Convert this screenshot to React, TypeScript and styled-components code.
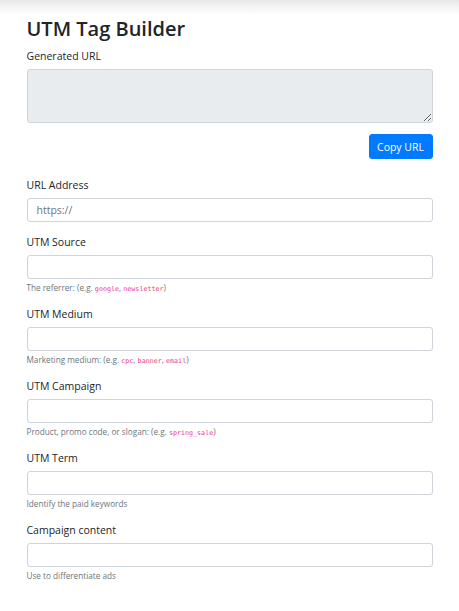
import React from "react";
import styled, { createGlobalStyle } from "styled-components";

const Global = createGlobalStyle`
  html, body { margin: 0; padding: 0; }
  body {
    background: linear-gradient(#e6e7ea 0px, #f6f6f7 8px, #ffffff 16px) no-repeat;
    background-size: 100% 16px;
    background-color: #fff;
    font-family: "Open Sans", "Noto Sans", sans-serif;
    color: #212529;
  }
  * { box-sizing: border-box; }
`;

const Container = styled.div`
  width: 406px;
  margin: 0 auto;
  padding-top: 16px;
  display: flex;
  flex-direction: column;
`;

const Title = styled.h1`
  margin: 0 0 7px;
  font-size: 20px;
  line-height: 25px;
  font-weight: 600;
  color: #212529;
`;

const Group = styled.div<{ $mb?: number }>`
  display: flex;
  flex-direction: column;
  margin-bottom: ${(p) => (p.$mb ?? 12)}px;
`;

const Label = styled.label`
  font-size: 10.5px;
  line-height: 16px;
  margin-bottom: 5px;
  color: #212529;
`;

const Input = styled.input`
  height: 24px;
  width: 100%;
  border: 1px solid #ced4da;
  border-radius: 3px;
  padding: 0 9px;
  font-family: inherit;
  font-size: 10.5px;
  color: #495057;
  background: #fff;
  outline: none;
  &::placeholder { color: #6c757d; }
`;

const TextArea = styled.textarea`
  height: 54px;
  width: 100%;
  border: 1px solid #ced4da;
  border-radius: 3px;
  background: #e9ecef;
  font-family: inherit;
  font-size: 10.5px;
  padding: 4px 9px;
  display: block;
  outline: none;
`;

const Help = styled.small`
  display: block;
  margin-top: 3px;
  font-size: 8.2px;
  line-height: 12px;
  height: 12px;
  color: #6c757d;
`;

const Code = styled.code`
  font-family: "DejaVu Sans Mono", "Liberation Mono", monospace;
  font-size: 6.7px;
  line-height: 1;
  color: #e83e8c;
`;

const ButtonRow = styled.div`
  display: flex;
  justify-content: flex-end;
  margin-bottom: 18px;
`;

const Button = styled.button`
  height: 25px;
  width: 64px;
  border: 1px solid #007bff;
  background: #007bff;
  color: #fff;
  border-radius: 3px;
  font-family: inherit;
  font-size: 10.5px;
  padding: 0;
  cursor: pointer;
`;

type Field = { label: string; placeholder?: string; help?: React.ReactNode };

const fields: Field[] = [
  { label: "URL Address", placeholder: "https://" },
  {
    label: "UTM Source",
    help: (
      <>
        The referrer: (e.g. <Code>google</Code>, <Code>newsletter</Code>)
      </>
    ),
  },
  {
    label: "UTM Medium",
    help: (
      <>
        Marketing medium: (e.g. <Code>cpc</Code>, <Code>banner</Code>, <Code>email</Code>)
      </>
    ),
  },
  {
    label: "UTM Campaign",
    help: (
      <>
        Product, promo code, or slogan: (e.g. <Code>spring_sale</Code>)
      </>
    ),
  },
  { label: "UTM Term", help: "Identify the paid keywords" },
  { label: "Campaign content", help: "Use to differentiate ads" },
];

export default function App() {
  return (
    <>
      <Global />
      <Container>
        <Title>UTM Tag Builder</Title>
        <Group $mb={11}>
          <Label>Generated URL</Label>
          <TextArea readOnly />
        </Group>
        <ButtonRow>
          <Button>Copy URL</Button>
        </ButtonRow>
        {fields.map((f) => (
          <Group key={f.label}>
            <Label>{f.label}</Label>
            <Input placeholder={f.placeholder} />
            {f.help && <Help>{f.help}</Help>}
          </Group>
        ))}
      </Container>
    </>
  );
}
